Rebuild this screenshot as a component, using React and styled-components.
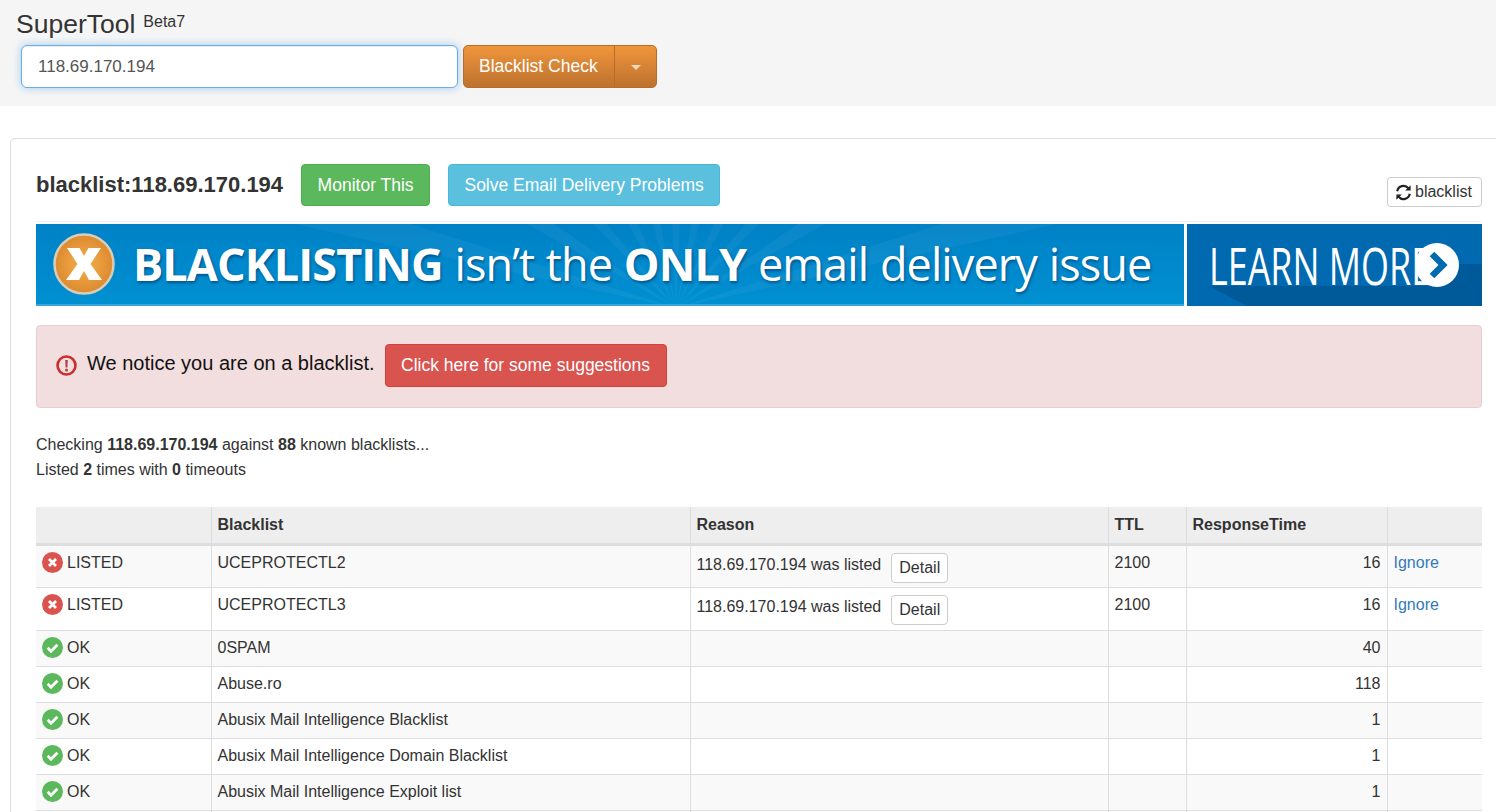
import React from "react";
import styled, { createGlobalStyle } from "styled-components";

const Global = createGlobalStyle`
  html, body { margin: 0; padding: 0; background: #fff; overflow: hidden; }
  body { font-family: "Liberation Sans", Arial, sans-serif; color: #333; font-size: 16px; }
  #root { height: 812px; overflow: hidden; }
  * { box-sizing: border-box; }
`;

const Header = styled.header`
  height: 106px;
  background: #f5f5f5;
  padding: 9px 0 0 16px;
`;
const Brand = styled.div`
  display: flex;
  align-items: flex-start;
  gap: 8px;
  height: 36px;
`;
const BrandName = styled.span`
  font-size: 26.5px;
  line-height: 30px;
`;
const BrandTag = styled.span`
  font-size: 16px;
  line-height: 26px;
`;
const SearchRow = styled.div`
  display: flex;
  gap: 5px;
  margin-left: 5px;
`;
const SearchInput = styled.input`
  width: 437px;
  height: 43px;
  padding: 0 16px;
  font: 17px "Liberation Sans", Arial, sans-serif;
  color: #555;
  background: #fff;
  border: 1px solid #66afe9;
  border-radius: 6px;
  outline: none;
  box-shadow: inset 0 1px 1px rgba(0,0,0,.075), 0 0 8px rgba(102,175,233,.6);
`;
const SplitButton = styled.div`
  display: flex;
  height: 43px;
  border: 1px solid #b56d28;
  border-radius: 5px;
  overflow: hidden;
  background: linear-gradient(#f0953c, #bd722e);
  color: #fff;
`;
const SplitMain = styled.span`
  display: flex;
  align-items: center;
  width: 151px;
  padding-left: 15px;
  font-size: 17.5px;
  border-right: 1px solid #b56d28;
`;
const SplitCaret = styled.span`
  display: flex;
  align-items: center;
  justify-content: center;
  width: 41px;
  &::after {
    content: "";
    margin-top: 2px;
    border-top: 5px solid #f4d9bb;
    border-left: 5px solid transparent;
    border-right: 5px solid transparent;
  }
`;

const Panel = styled.main`
  margin: 32px 0 0 10px;
  width: 1498px;
  padding: 25px 25px 0;
  border: 1px solid #ddd;
  border-radius: 5px 0 0 0;
`;
const TitleRow = styled.div`
  display: flex;
  align-items: center;
  height: 42px;
  padding-bottom: 0;
`;
const Title = styled.h1`
  margin: 0 18px 0 0;
  font-size: 22px;
  font-weight: 700;
`;
const Btn = styled.span`
  display: inline-flex;
  align-items: center;
  justify-content: center;
  height: ${p => p.$h || 42}px;
  width: ${p => p.$w}px;
  margin-right: ${p => p.$mr || 0}px;
  font-size: 17.5px;
  color: #fff;
  background: ${p => p.$bg};
  border: 1px solid ${p => p.$bd};
  border-radius: 4px;
`;
const RefreshBtn = styled.span`
  display: inline-flex;
  align-items: center;
  gap: 3px;
  margin: 14px 0 0 auto;
  width: 95px;
  height: 30px;
  padding-left: 7px;
  border: 1px solid #ccc;
  border-radius: 4px;
  font-size: 16px;
`;
const Rule = styled.hr`
  margin: 15px 0 2px;
  border: 0;
  border-top: 1px solid #eee;
`;

const Banner = styled.div`
  display: flex;
  height: 82px;
  background: #fff;
`;
const BannerLeft = styled.div`
  position: relative;
  overflow: hidden;
  flex: 0 0 1148px;
  display: flex;
  align-items: center;
  padding-left: 17px;
  color: #fff;
  background: linear-gradient(#0081c6, #0090d2);
  border-bottom: 2px solid #3aa5dc;
  font-family: "Open Sans", sans-serif;
`;
const Rays = styled.svg`
  position: absolute;
  inset: 0;
`;
const BannerText = styled.div`
  position: relative;
  margin-left: 18px;
  font-size: 45px;
  line-height: 80px;
  white-space: nowrap;
  letter-spacing: -0.9px;
  word-spacing: 1px;
  text-shadow: 1px 2px 3px rgba(0,40,90,.55);
  b { font-weight: 700; }
`;
const BannerRight = styled.div`
  position: relative;
  overflow: hidden;
  flex: 0 0 295px;
  margin-left: 3px;
  display: flex;
  align-items: center;
  color: #fff;
  background: #0069b0;
  font-family: "Open Sans", sans-serif;
`;
const LearnMore = styled.span`
  position: relative;
  display: inline-block;
  margin-left: 22px;
  width: 197px;
  font-size: 52px;
  line-height: 80px;
  white-space: nowrap;
  transform: scaleX(.69);
  transform-origin: left center;
`;
const Arrow = styled.svg`
  position: relative;
  margin-left: 9px;
`;

const Alert = styled.div`
  display: flex;
  align-items: center;
  height: 83px;
  margin-top: 19px;
  padding: 0 0 2px 19px;
  background: #f2dede;
  border: 1px solid #ebccd1;
  border-radius: 4px;
  color: #111;
  font-size: 20px;
`;
const AlertText = styled.span`
  margin: 0 10px 0 10px;
  position: relative;
  top: -2px;
`;
const Summary = styled.p`
  margin: 24px 0 25px;
  line-height: 25px;
  font-size: 16px;
`;

const Table = styled.table`
  width: 1446px;
  table-layout: fixed;
  border-collapse: collapse;
  font-size: 16px;
`;
const Th = styled.th`
  height: 37px;
  padding: 0 6px;
  text-align: left;
  font-weight: 700;
  background: #eee;
  border-bottom: 3px solid #ddd;
  border-left: 1px solid #ddd;
  &:first-child { border-left: 0; }
`;
const Tr = styled.tr`
  background: ${p => (p.$odd ? "#f9f9f9" : "#fff")};
  height: ${p => (p.$tall ? 43 : 36)}px;
`;
const Td = styled.td`
  padding: ${p => (p.$tall ? "7px" : "6px")} 6px 0;
  vertical-align: top;
  line-height: 22px;
  text-align: ${p => (p.$right ? "right" : "left")};
  border-top: 1px solid #ddd;
  border-left: 1px solid #ddd;
  &:first-child { border-left: 0; }
  tr:first-child > & { border-top: 0; }
`;
const StatusCell = styled.span`
  display: inline-flex;
  align-items: center;
  gap: 4px;
  height: 22px;
  white-space: nowrap;
`;
const ReasonText = styled.span`
  display: inline-block;
  margin-top: 1px;
`;
const DetailBtn = styled.span`
  display: inline-flex;
  align-items: center;
  justify-content: center;
  width: 57px;
  height: 30px;
  margin-left: 10px;
  vertical-align: top;
  background: #fff;
  border: 1px solid #ccc;
  border-radius: 4px;
`;
const IgnoreLink = styled.a`
  color: #337ab7;
  text-decoration: none;
`;

const StatusIcon = ({ ok }) => (
  <svg width="21" height="21" viewBox="0 0 21 21">
    <circle cx="10.5" cy="10.5" r="10.5" fill={ok ? "#5cb85c" : "#d9534f"} />
    {ok ? (
      <path d="M5.6 10.8l3.4 3.4 6.4-6.4" fill="none" stroke="#fff" strokeWidth="2.8" />
    ) : (
      <path d="M7 7l7 7M14 7l-7 7" fill="none" stroke="#fff" strokeWidth="2.8" />
    )}
  </svg>
);

const Refresh = () => (
  <svg width="17" height="17" viewBox="0 0 17 17">
    <path d="M2.2 7.2A6.4 6.4 0 0 1 13.4 4.2" fill="none" stroke="#222" strokeWidth="2.1" />
    <path d="M15.6 1.2v5.4h-5.4z" fill="#222" />
    <path d="M14.8 9.8A6.4 6.4 0 0 1 3.6 12.8" fill="none" stroke="#222" strokeWidth="2.1" />
    <path d="M1.4 15.8v-5.4h5.4z" fill="#222" />
  </svg>
);

const rows = [
  ["LISTED", "UCEPROTECTL2", true, "2100", "16"],
  ["LISTED", "UCEPROTECTL3", true, "2100", "16"],
  ["OK", "0SPAM", false, "", "40"],
  ["OK", "Abuse.ro", false, "", "118"],
  ["OK", "Abusix Mail Intelligence Blacklist", false, "", "1"],
  ["OK", "Abusix Mail Intelligence Domain Blacklist", false, "", "1"],
  ["OK", "Abusix Mail Intelligence Exploit list", false, "", "1"],
  ["OK", "Abusix Mail Intelligence Policy Blacklist", false, "", "1"],
];

const rayAngles = [-75, -58, -42, -27, -13, 0, 13, 27, 42, 58, 75];

export default function App() {
  return (
    <>
      <Global />
      <Header>
        <Brand>
          <BrandName>SuperTool</BrandName>
          <BrandTag>Beta7</BrandTag>
        </Brand>
        <SearchRow>
          <SearchInput defaultValue="118.69.170.194" />
          <SplitButton>
            <SplitMain>Blacklist Check</SplitMain>
            <SplitCaret />
          </SplitButton>
        </SearchRow>
      </Header>
      <Panel>
        <TitleRow>
          <Title>blacklist:118.69.170.194</Title>
          <Btn $w={129} $mr={18} $bg="#5cb85c" $bd="#4cae4c">Monitor This</Btn>
          <Btn $w={272} $bg="#5bc0de" $bd="#46b8da">Solve Email Delivery Problems</Btn>
          <RefreshBtn><Refresh />blacklist</RefreshBtn>
        </TitleRow>
        <Rule />
        <Banner>
          <BannerLeft>
            <Rays width="1148" height="80" viewBox="0 0 1148 80">
              {rayAngles.map(a => {
                const r = (a * Math.PI) / 180;
                const d = 0.045;
                const L = 1100;
                return (
                  <polygon
                    key={a}
                    points={`640,84 ${640 + L * Math.sin(r - d)},${84 - L * Math.cos(r - d)} ${640 + L * Math.sin(r + d)},${84 - L * Math.cos(r + d)}`}
                    fill="#fff"
                    opacity=".045"
                  />
                );
              })}
            </Rays>
            <svg width="62" height="62" viewBox="0 0 62 62" style={{ position: "relative" }}>
              <defs>
                <radialGradient id="orb">
                  <stop offset="0" stopColor="#f6b04a" />
                  <stop offset="1" stopColor="#dc8a30" />
                </radialGradient>
              </defs>
              <circle cx="31" cy="31" r="29.5" fill="url(#orb)" stroke="#d9cdb8" strokeWidth="2.5" />
              <path d="M14 15h12.5l4.5 8 4.5-8H48L37.5 31 49 47H36l-5-9-5 9H13l11.500-16z" fill="#fff" />
            </svg>
            <BannerText><b>BLACKLISTING</b> isn’t the <b>ONLY</b> email delivery issue</BannerText>
          </BannerLeft>
          <BannerRight>
            <Rays width="295" height="82" viewBox="0 0 295 82">
              <polygon points="22,62 60,82 295,82 295,40 270,40 240,62" fill="#005a99" />
            </Rays>
            <LearnMore>LEARN MORE</LearnMore>
            <Arrow width="44" height="44" viewBox="0 0 44 44">
              <circle cx="22" cy="22" r="22" fill="#fff" />
              <path d="M17 11l11 11-11 11" fill="none" stroke="#0069b0" strokeWidth="6.500" />
            </Arrow>
          </BannerRight>
        </Banner>
        <Alert>
          <svg width="21" height="21" viewBox="0 0 21 21">
            <circle cx="10.500" cy="10.500" r="9" fill="none" stroke="#c9302c" strokeWidth="2.600" />
            <path d="M9.200 5h2.600l-.4 7.500H9.600z" fill="#a94442" />
            <circle cx="10.500" cy="15" r="1.500" fill="#a94442" />
          </svg>
          <AlertText>We notice you are on a blacklist.</AlertText>
          <Btn $w={282} $h={43} $bg="#d9534f" $bd="#d43f3a">Click here for some suggestions</Btn>
        </Alert>
        <Summary>
          Checking <b>118.69.170.194</b> against <b>88</b> known blacklists...<br />
          Listed <b>2</b> times with <b>0</b> timeouts
        </Summary>
        <Table>
          <colgroup>
            <col width="175" />
            <col width="479" />
            <col width="418" />
            <col width="78" />
            <col width="201" />
            <col width="95" />
          </colgroup>
          <thead>
            <tr>
              <Th />
              <Th>Blacklist</Th>
              <Th>Reason</Th>
              <Th>TTL</Th>
              <Th>ResponseTime</Th>
              <Th />
            </tr>
          </thead>
          <tbody>
            {rows.map(([status, name, listed, ttl, time], i) => (
              <Tr key={name} $odd={i % 2 === 0} $tall={listed}>
                <Td>
                  <StatusCell><StatusIcon ok={!listed} />{status}</StatusCell>
                </Td>
                <Td>{name}</Td>
                <Td $tall={listed}>
                  {listed && (
                    <>
                      <ReasonText>118.69.170.194 was listed</ReasonText>
                      <DetailBtn>Detail</DetailBtn>
                    </>
                  )}
                </Td>
                <Td>{ttl}</Td>
                <Td $right>{time}</Td>
                <Td>{listed && <IgnoreLink href="#">Ignore</IgnoreLink>}</Td>
              </Tr>
            ))}
          </tbody>
        </Table>
      </Panel>
    </>
  );
}
